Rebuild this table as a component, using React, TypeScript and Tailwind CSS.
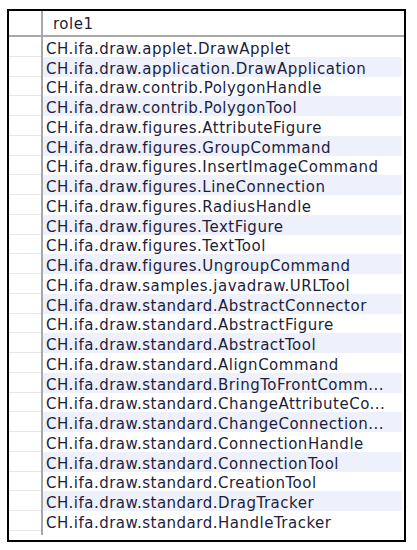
import React from 'react';

const rows = [
  "CH.ifa.draw.applet.DrawApplet",
  "CH.ifa.draw.application.DrawApplication",
  "CH.ifa.draw.contrib.PolygonHandle",
  "CH.ifa.draw.contrib.PolygonTool",
  "CH.ifa.draw.figures.AttributeFigure",
  "CH.ifa.draw.figures.GroupCommand",
  "CH.ifa.draw.figures.InsertImageCommand",
  "CH.ifa.draw.figures.LineConnection",
  "CH.ifa.draw.figures.RadiusHandle",
  "CH.ifa.draw.figures.TextFigure",
  "CH.ifa.draw.figures.TextTool",
  "CH.ifa.draw.figures.UngroupCommand",
  "CH.ifa.draw.samples.javadraw.URLTool",
  "CH.ifa.draw.standard.AbstractConnector",
  "CH.ifa.draw.standard.AbstractFigure",
  "CH.ifa.draw.standard.AbstractTool",
  "CH.ifa.draw.standard.AlignCommand",
  "CH.ifa.draw.standard.BringToFrontComm...",
  "CH.ifa.draw.standard.ChangeAttributeCo...",
  "CH.ifa.draw.standard.ChangeConnection...",
  "CH.ifa.draw.standard.ConnectionHandle",
  "CH.ifa.draw.standard.ConnectionTool",
  "CH.ifa.draw.standard.CreationTool",
  "CH.ifa.draw.standard.DragTracker",
  "CH.ifa.draw.standard.HandleTracker",
];

export default function App() {
  return (
    <div className="w-[417px] h-[550px] bg-white pt-[9px] pl-[7px]">
      <div
        className="w-[399px] h-[533px] border-2 border-black overflow-hidden flex flex-col text-[#1c1e3c]"
        style={{ fontFamily: '"DejaVu Sans", Tahoma, sans-serif' }}
      >
        {/* header */}
        <div className="flex h-[26px] shrink-0 border-b-2 border-[#a8a8a8]">
          <div className="w-[34px] shrink-0 border-r-2 border-[#a8a8a8]" />
          <div className="flex-1 pl-[10px] pt-[2px] flex items-center text-[15px] tracking-[0.5px]">role1</div>
        </div>
        {/* body */}
        <div className="flex flex-1">
          <div className="w-[34px] shrink-0 border-r-2 border-[#a8a8a8] mb-[5px]">
            {rows.map((_, i) => (
              <div key={i} className="h-[19.75px] border-b border-[#e6e6e6]" />
            ))}
          </div>
          <div className="flex-1 pr-[2px]">
            {rows.map((r, i) => (
              <div
                key={i}
                className={`h-[19.75px] pl-[3px] pt-[5px] flex items-center text-[15px] tracking-[0.5px] leading-none whitespace-nowrap overflow-hidden ${
                  i % 2 === 1 ? 'bg-[#eef1fb]' : 'bg-white'
                }`}
              >
                {r}
              </div>
            ))}
          </div>
        </div>
      </div>
    </div>
  );
}
